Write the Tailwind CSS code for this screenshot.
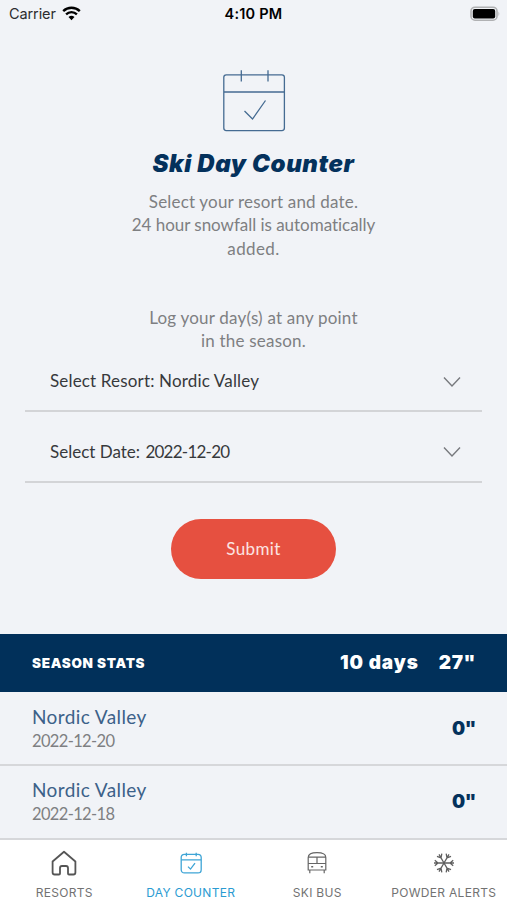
<!DOCTYPE html>
<html lang="en">
<head>
<meta charset="utf-8">
<meta name="viewport" content="width=device-width, initial-scale=1">
<title>Ski Day Counter</title>
<script src="https://cdn.jsdelivr.net/npm/@tailwindcss/browser@4"></script>
</head>
<body class="bg-[#f1f3f7]">
<div class="w-[507px] h-[900px] overflow-hidden flex flex-col bg-[#f1f3f7] font-[Lato,sans-serif] whitespace-nowrap [font-variant-ligatures:none]">
  <header class="h-[28px] shrink-0 grid grid-cols-3 items-center pl-[9px] pr-[7px] font-[Inter,sans-serif] text-black">
    <div class="flex items-center gap-[6px]">
      <span class="text-[14.5px] text-[#2b2c2e] tracking-[-0.1px]">Carrier</span>
      <svg class="w-[19px] h-[15px] -mt-[2px]" viewBox="0 0 19 15" fill="none" stroke="#000" stroke-width="2.4"><path d="M1.2 5.1a12 12 0 0 1 16.6 0M4.1 8.3a7.8 7.8 0 0 1 10.8 0"/><path d="M9.5 14.2 6.5 11.1a4.4 4.4 0 0 1 6 0Z" fill="#000" stroke="none"/></svg>
    </div>
    <div class="text-center text-[14.5px] font-semibold tracking-[0.2px] -ml-[2px]">4:10 PM</div>
    <svg class="justify-self-end w-[30px] h-[16px] -mt-[1px]" viewBox="0 0 30 16"><rect x="1" y="1.2" width="26" height="13" rx="4" fill="#f1f3f7" stroke="#b0b1b3" stroke-width="1.6"/><rect x="2.8" y="3" width="22.4" height="9.4" rx="2" fill="#000"/><path d="M28.5 5.5q1.6 2.3 0 4.6z" fill="#b0b1b3"/></svg>
  </header>
  <section class="h-[606px] shrink-0 flex flex-col items-center pt-[41px]">
    <svg class="w-[64px] h-[64px] shrink-0" viewBox="0 0 64 64" fill="none" stroke="#456b92" stroke-width="1.3"><rect x="1.8" y="5.8" width="60.6" height="55.8" rx="2.5"/><path d="M2 23h60.4M19.3 1.2v11.3M46 1.2v11.3M22.5 42l8 8L43.5 31.5"/></svg>
    <h1 class="mt-[16px] h-[30px] leading-[30px] font-[Inter,sans-serif] text-[24px] font-black italic text-[#04315c] tracking-[0.6px]">Ski Day Counter</h1>
    <p class="mt-[11px] text-center text-[17px] leading-[23.3px] text-[#7e7f82]"><span class="tracking-[0.18px]">Select your resort and date.</span><br><span class="tracking-[-0.03px]">24 hour snowfall is automatically</span><br><span class="tracking-[0.4px]">added.</span></p>
    <p class="mt-[46px] text-center text-[17px] leading-[23.3px] text-[#7e7f82] tracking-[0.2px]">Log your day(s) at any point<br>in the season.</p>
    <div class="w-[457px] self-start ml-[25px] text-[17px] text-[#37393c]">
      <div class="h-[60px] flex items-center justify-between pl-[25px] pr-[20px] border-b-2 border-[#d3d4d7]"><span class="tracking-[0.16px] -mt-px">Select Resort: Nordic Valley</span><svg class="w-[19px] h-[12px] mt-px" viewBox="0 0 19 12" fill="none" stroke="#77797d" stroke-width="1.4"><path d="M1 1.5 9 10l8-8.5"/></svg></div>
      <div class="h-[71px] pt-[12px] flex items-center justify-between pl-[25px] pr-[20px] border-b-2 border-[#d3d4d7]"><span class="-mt-[2px]">Select Date: <span class="tracking-[-0.75px] ml-[1px]">2022-12-20</span></span><svg class="w-[19px] h-[12px] -mt-px" viewBox="0 0 19 12" fill="none" stroke="#77797d" stroke-width="1.4"><path d="M1 1.5 9 10l8-8.5"/></svg></div>
    </div>
    <button class="mt-[36px] w-[165px] h-[60px] pb-[2px] shrink-0 rounded-full bg-[#e65040] text-white/85 text-[17px] tracking-[0.4px]">Submit</button>
  </section>
  <section class="h-[206px] shrink-0 text-[#04315c]">
    <div class="h-[58px] bg-[#01305a] text-white flex items-center pl-[32px] pr-[31px] font-[Inter,sans-serif] font-black"><span class="text-[13.5px] tracking-[0.7px]">SEASON STATS</span><span class="ml-auto pt-px text-[19px] tracking-[0.9px]">10 days</span><span class="ml-[20px] pt-px text-[19px] tracking-[0.6px]">27"</span></div>
    <div class="h-[74px] flex items-center justify-between pl-[32px] pr-[31px] border-b-2 border-[#d6d7da]"><div class="mt-px"><div class="text-[19px] leading-[24px] text-[#3c6189] tracking-[0.4px]">Nordic Valley</div><div class="text-[16.5px] leading-[24px] text-[#7e7f82] tracking-[-0.65px]">2022-12-20</div></div><span class="mt-px font-[Inter,sans-serif] text-[18.5px] font-black tracking-[-0.3px]">0"</span></div>
    <div class="h-[74px] flex items-center justify-between pl-[32px] pr-[31px] border-b-2 border-[#d6d7da]"><div class="-mt-px"><div class="text-[19px] leading-[25px] text-[#3c6189] tracking-[0.4px]">Nordic Valley</div><div class="text-[16.5px] leading-[24px] text-[#7e7f82] tracking-[-0.65px]">2022-12-18</div></div><span class="font-[Inter,sans-serif] text-[18.5px] font-black tracking-[-0.3px]">0"</span></div>
  </section>
  <nav class="h-[60px] shrink-0 bg-white grid grid-cols-4 pl-px font-[Inter,sans-serif] text-[12px] text-[#727272] tracking-[0.3px]">
    <a class="flex flex-col items-center pt-[9px] gap-[8px]"><svg class="w-[28px] h-[28px]" viewBox="0 0 28 28" fill="none" stroke="#555" stroke-width="1.8" stroke-linejoin="round"><path d="M2.6 12.5 14 2.8 25.4 12.5V23.5q0 2-2 2H19q-1 0-1-1V19q0-2-2-2h-4q-2 0-2 2v5.5q0 1-1 1H4.6q-2 0-2-2Z"/></svg><span class="leading-[16px]">RESORTS</span></a>
    <a class="flex flex-col items-center pt-[9px] gap-[8px] text-[#2b9bd2]"><svg class="w-[28px] h-[28px]" viewBox="0 0 28 28" fill="none" stroke="#3fa5d6" stroke-width="1.3"><rect x="4.2" y="5.3" width="20" height="18.6" rx="3.2"/><path d="M4.2 10.8h20M9.4 3.8v3.4M19.2 3.8v3.4M11 17.6l2.5 2.5 4.5-6"/></svg><span class="leading-[16px]">DAY COUNTER</span></a>
    <a class="flex flex-col items-center pt-[9px] gap-[8px]"><svg class="w-[28px] h-[28px]" viewBox="0 0 28 28" fill="none" stroke="#666" stroke-width="1.2"><path d="M5.2 21V8.5Q5.2 3.6 14 3.6T22.8 8.5V21ZM6.8 21v3.2M21.2 21v3.2M5.2 8.2h17.6M5.2 14.5h17.6M14 8.2v6.3"/><path d="M8.2 17.8h2M17.8 17.8h2" stroke-width="1.6"/></svg><span class="leading-[16px]">SKI BUS</span></a>
    <a class="flex flex-col items-center pt-[9px] gap-[8px]"><svg class="w-[28px] h-[28px]" viewBox="-14 -14 28 28" fill="none" stroke="#606060" stroke-width="1.3"><defs><path id="arm" d="M0 0V-10M-2.8-9.2 0-6 2.8-9.2"/></defs><use href="#arm" transform="rotate(30)"/><use href="#arm" transform="rotate(90)"/><use href="#arm" transform="rotate(150)"/><use href="#arm" transform="rotate(210)"/><use href="#arm" transform="rotate(270)"/><use href="#arm" transform="rotate(330)"/></svg><span class="leading-[16px]">POWDER ALERTS</span></a>
  </nav>
</div>
</body>
</html>
